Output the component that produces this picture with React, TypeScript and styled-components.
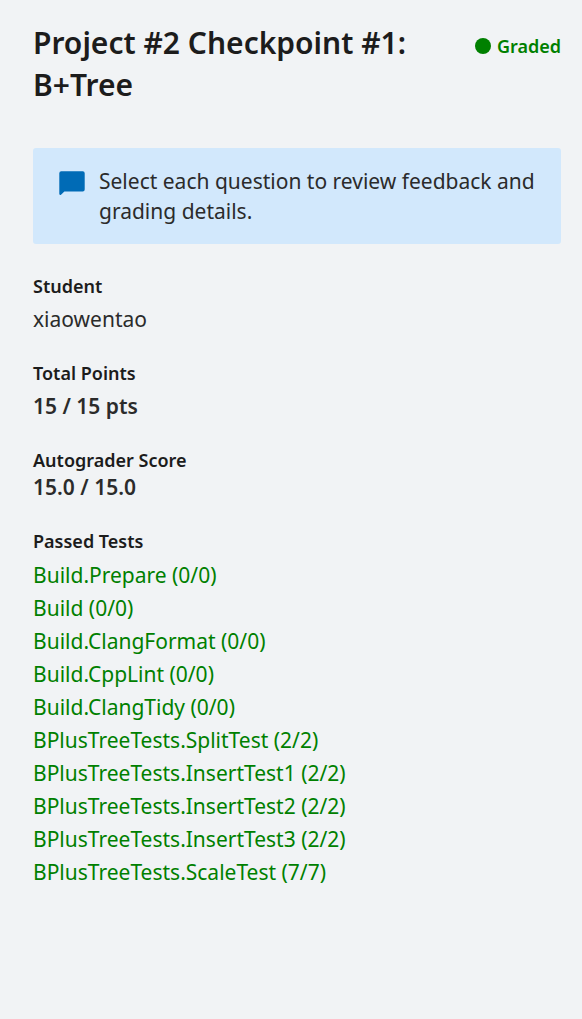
import React from "react";
import styled, { createGlobalStyle } from "styled-components";

const GlobalStyle = createGlobalStyle`
  *, *::before, *::after { box-sizing: border-box; }
  body { margin: 0; background: #f1f3f5; font-family: "Noto Sans", sans-serif; }
`;
const Page = styled.main`
  min-height: 1019px;
  padding: 22px 21px 0 33px;
  background: #f1f3f5;
  color: #1c1c1c;
`;
const Header = styled.header`
  display: flex;
  justify-content: space-between;
  align-items: flex-start;
  height: 126px;
`;
const Title = styled.h1`
  margin: 0;
  width: 400px;
  font-size: 30px;
  line-height: 42px;
  font-weight: 600;
`;
const Status = styled.div`
  display: flex;
  align-items: center;
  gap: 6px;
  margin-top: 12px;
  font-size: 18px;
  line-height: 25px;
  font-weight: 600;
  color: #008000;
`;
const Dot = styled.span`
  width: 16px;
  height: 16px;
  margin-bottom: 1px;
  border-radius: 50%;
  background: #008000;
`;
const Notice = styled.section`
  display: flex;
  gap: 14px;
  height: 96px;
  padding: 18px 20px 18px 26px;
  border-radius: 3px;
  background: #d2e8fc;
  color: #2b2b2b;
`;
const NoticeIcon = styled.svg`
  flex: none;
  width: 26px;
  height: 26px;
  margin-top: 5px;
  fill: #006bb6;
`;
const NoticeText = styled.p`
  margin: 0;
  font-size: 21px;
  line-height: 30px;
`;
const Field = styled.section<{ $top: number }>`
  margin-top: ${(p) => p.$top}px;
`;
const Label = styled.h2`
  margin: 0;
  font-size: 18px;
  line-height: 27px;
  font-weight: 600;
`;
const Value = styled.div<{ $bold?: boolean; $gap?: number }>`
  margin-top: ${(p) => p.$gap ?? 6}px;
  font-size: 21px;
  line-height: 27px;
  font-weight: ${(p) => (p.$bold ? 600 : 400)};
  color: #2b2b2b;
`;
const Tests = styled.ul`
  margin: 4px 0 0;
  padding: 0;
  list-style: none;
`;
const Test = styled.li`
  font-size: 21px;
  line-height: 33px;
  color: #008000;
`;

const tests = [
  "Build.Prepare (0/0)",
  "Build (0/0)",
  "Build.ClangFormat (0/0)",
  "Build.CppLint (0/0)",
  "Build.ClangTidy (0/0)",
  "BPlusTreeTests.SplitTest (2/2)",
  "BPlusTreeTests.InsertTest1 (2/2)",
  "BPlusTreeTests.InsertTest2 (2/2)",
  "BPlusTreeTests.InsertTest3 (2/2)",
  "BPlusTreeTests.ScaleTest (7/7)",
];

export default function App() {
  return (
    <Page>
      <GlobalStyle />
      <Header>
        <Title>Project #2 Checkpoint #1: B+Tree</Title>
        <Status><Dot />Graded</Status>
      </Header>
      <Notice>
        <NoticeIcon viewBox="0 0 26 26" aria-hidden="true">
          <path d="M2.3 0.3H23.7Q25.7 0.3 25.7 2.3V18.5Q25.7 20.5 23.7 20.5H5.4L2 23.7Q0.3 24.5 0.3 22.8V2.3Q0.3 0.3 2.3 0.3Z" />
        </NoticeIcon>
        <NoticeText>Select each question to review feedback and grading details.</NoticeText>
      </Notice>
      <Field $top={29}><Label>Student</Label><Value>xiaowentao</Value></Field>
      <Field $top={27}><Label>Total Points</Label><Value $bold>15 / 15 pts</Value></Field>
      <Field $top={27}><Label>Autograder Score</Label><Value $bold $gap={0}>15.0 / 15.0</Value></Field>
      <Field $top={27}>
        <Label>Passed Tests</Label>
        <Tests>{tests.map((t) => <Test key={t}>{t}</Test>)}</Tests>
      </Field>
    </Page>
  );
}
